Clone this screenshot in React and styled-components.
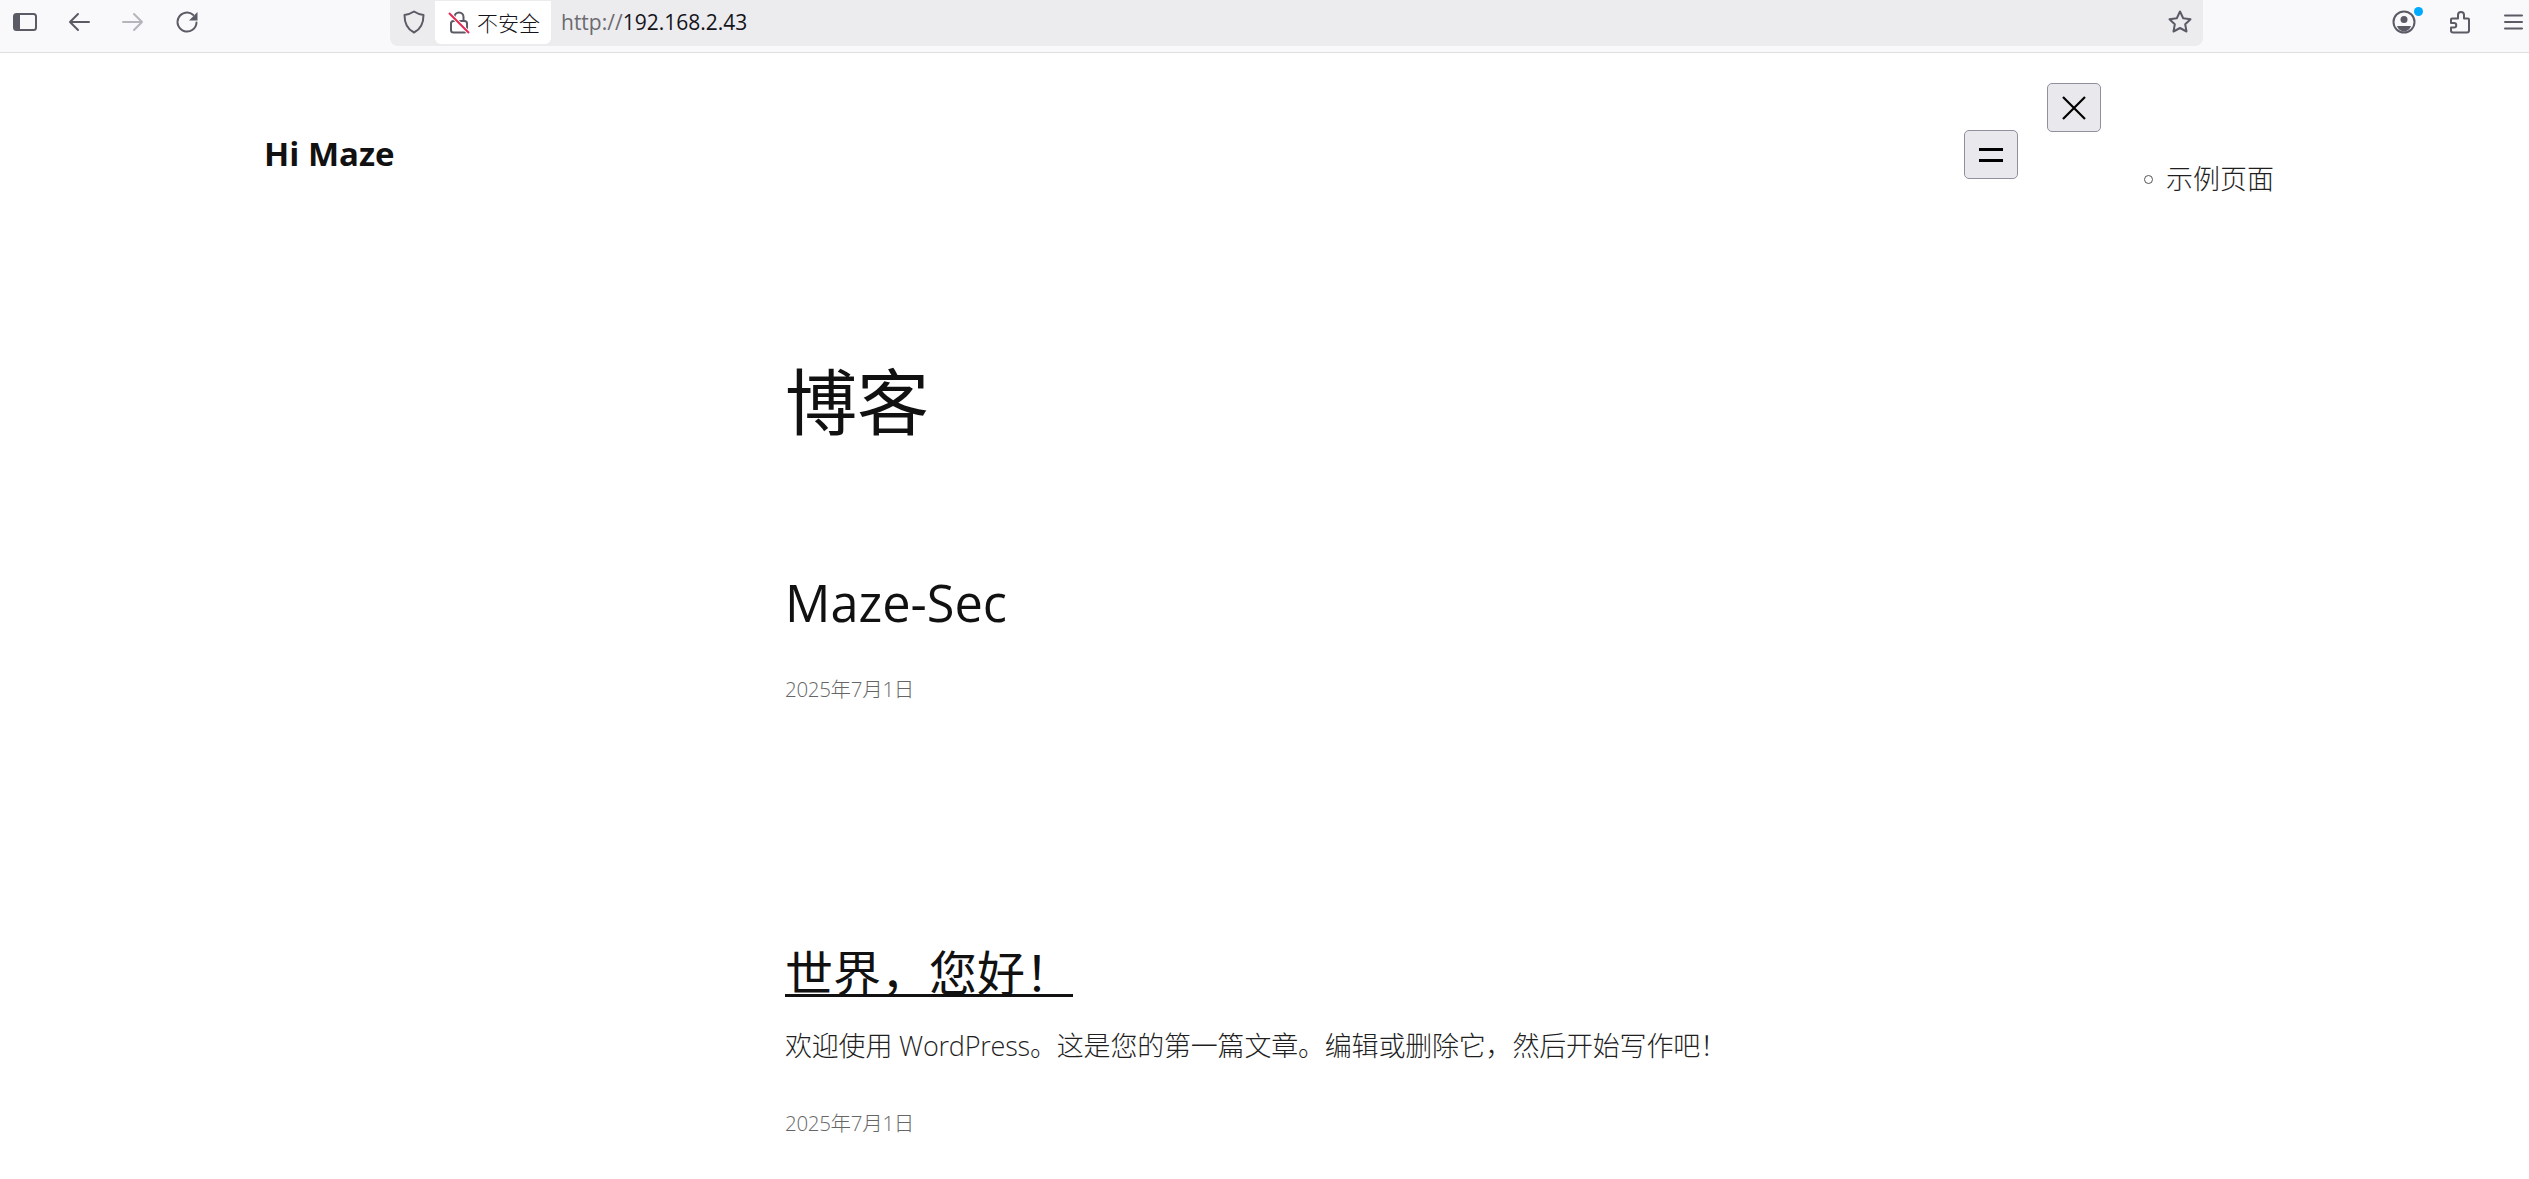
import styled, { createGlobalStyle } from 'styled-components';

const GlobalStyle = createGlobalStyle`
  html, body {
    margin: 0;
    padding: 0;
    background: #fff;
  }
  body {
    font-family: "Open Sans", "Noto Sans CJK SC", sans-serif;
    font-weight: 300;
    color: #111;
    overflow: hidden;
  }
`;

const Page = styled.div`
  width: 2529px;
  height: 1179px;
  overflow: hidden;
`;

/* browser chrome */
const Toolbar = styled.div`
  display: flex;
  align-items: flex-start;
  height: 52px;
  background: #f9f9fb;
  border-bottom: 1px solid #e0e0e2;
`;

const NavIcons = styled.div`
  display: flex;
  align-items: center;
  width: 390px;
  height: 44px;
  padding-left: 13px;
  gap: 30px;
  box-sizing: border-box;
`;

const UrlBar = styled.div`
  display: flex;
  align-items: center;
  width: 1813px;
  height: 46px;
  padding: 0 11px 2px 12px;
  box-sizing: border-box;
  background: #ececef;
  border-radius: 0 0 8px 8px;
`;

const NotSecure = styled.div`
  display: flex;
  align-items: center;
  gap: 7px;
  width: 116px;
  height: 43px;
  margin: -1px 0 -1px 9px;
  padding-left: 13px;
  box-sizing: border-box;
  background: #fff;
  border-radius: 0 0 6px 6px;
  font-family: "Noto Sans CJK SC", sans-serif;
  font-weight: 300;
  font-size: 21px;
  color: #15141a;
  white-space: nowrap;
`;

const Url = styled.div`
  flex: 1;
  margin-left: 10px;
  font-family: "Open Sans", sans-serif;
  font-weight: 400;
  font-size: 21px;
  color: #15141a;
  span {
    color: #6b6b70;
  }
`;

const RightIcons = styled.div`
  display: flex;
  align-items: center;
  width: 326px;
  height: 44px;
  padding-left: 189px;
  box-sizing: border-box;
`;

const ToolIcon = styled.div`
  position: relative;
  display: flex;
  margin-right: ${(p) => p.$after}px;
`;

const Dot = styled.span`
  position: absolute;
  top: -3px;
  right: -7px;
  width: 9px;
  height: 9px;
  border-radius: 50%;
  background: #0af;
`;

/* site header */
const Header = styled.header`
  display: flex;
  align-items: flex-start;
  padding: 30px 255px 0 264px;
`;

const SiteTitle = styled.div`
  flex: 1;
  margin-top: 49px;
  font-family: "Open Sans", sans-serif;
  font-weight: 700;
  font-size: 33px;
  line-height: 44px;
  color: #111;
`;

const SquareButton = styled.button`
  display: flex;
  align-items: center;
  justify-content: center;
  width: 54px;
  height: 49px;
  padding: 0;
  background: #e9e9ed;
  border: 1px solid #8f8f9d;
  border-radius: 5px;
`;

const OpenButton = styled(SquareButton)`
  margin-top: 47px;
`;

const Nav = styled.nav`
  margin-left: 29px;
`;

const MenuList = styled.ul`
  margin: 27px 0 0;
  padding: 0 0 0 97px;
  list-style: none;
  font-size: 27px;
  line-height: 40px;
  color: #1f1f1f;
`;

const MenuItem = styled.li`
  display: flex;
  align-items: center;
  gap: 13px;
  white-space: nowrap;
  &::before {
    content: '';
    width: 9px;
    height: 9px;
    box-sizing: border-box;
    border: 1px solid #555;
    border-radius: 50%;
  }
`;

/* posts */
const Main = styled.main`
  padding-left: 785px;
`;

const PageTitle = styled.h1`
  margin: 156px 0 0;
  font-weight: 400;
  font-size: 72px;
  line-height: 92px;
`;

const Post = styled.article`
  margin-top: ${(p) => p.$gap}px;
`;

const PostTitle = styled.h2`
  margin: 0;
  font-weight: 400;
  font-size: 50.5px;
  line-height: 70px;
`;

const PostLink = styled.a`
  color: #111;
  font-size: 48px;
  text-decoration: underline;
  text-decoration-thickness: 3px;
  text-underline-offset: 3px;
`;

const Excerpt = styled.p`
  margin: 18px 0 0;
  font-size: 27px;
  line-height: 40px;
  letter-spacing: -0.2px;
  color: #1f1f1f;
`;

const PostDate = styled.div`
  margin-top: ${(p) => p.$gap}px;
  font-size: 20.5px;
  line-height: 30px;
  letter-spacing: -0.3px;
  color: #666;
`;

const stroke = { fill: 'none', stroke: '#5b5b66', strokeWidth: 2, strokeLinecap: 'round', strokeLinejoin: 'round' };

const App = () => (
  <Page>
    <GlobalStyle />
    <Toolbar>
      <NavIcons>
        <svg width="24" height="24" viewBox="0 0 24 24">
          <rect x="1" y="4" width="22" height="16" rx="2.5" {...stroke} />
          <rect x="1" y="4" width="6" height="16" fill="#5b5b66" />
        </svg>
        <svg width="24" height="24" viewBox="0 0 24 24">
          <path d="M22 12H3M11 4l-8 8 8 8" {...stroke} />
        </svg>
        <svg width="24" height="24" viewBox="0 0 24 24">
          <path d="M2 12h19M13 4l8 8-8 8" {...stroke} stroke="#b5b5bb" />
        </svg>
        <svg width="24" height="24" viewBox="0 0 24 24">
          <path d="M21.5 12.5a9.5 9.5 0 1 1-3.2-7.6" {...stroke} />
          <path d="M22.5 2v8.5h-8.5z" fill="#5b5b66" />
        </svg>
      </NavIcons>
      <UrlBar>
        <svg width="24" height="24" viewBox="0 0 24 24">
          <path d="M12 1.5c3 2 6 3 9.5 3.5 0 8-2 14-9.5 17.5C4.5 19 2.5 13 2.5 5 6 4.500 9 3.500 12 1.500z" {...stroke} />
        </svg>
        <NotSecure>
          <svg width="22" height="24" viewBox="0 0 22 24">
            <path d="M6.5 11V7a4.5 4.5 0 0 1 9 0v4" {...stroke} />
            <rect x="3" y="11" width="16" height="11.5" rx="2.5" {...stroke} />
            <path d="M1 3l20 20" fill="none" stroke="#fff" strokeWidth="4" />
            <path d="M1 3l20 20" fill="none" stroke="#e22850" strokeWidth="2" />
          </svg>
          不安全
        </NotSecure>
        <Url>
          <span>http://</span>192.168.2.43
        </Url>
        <svg width="24" height="24" viewBox="0 0 24 24">
          <path d="M12 1.5l3.2 6.7 7.3 1-5.3 5.1 1.3 7.2-6.5-3.5-6.5 3.5 1.3-7.2-5.3-5.1 7.3-1z" {...stroke} />
        </svg>
      </UrlBar>
      <RightIcons>
        <ToolIcon $after={32}>
          <svg width="24" height="24" viewBox="0 0 24 24">
            <circle cx="12" cy="12" r="10.5" {...stroke} />
            <circle cx="12" cy="9.5" r="3.5" fill="#5b5b66" />
            <path d="M5 16h14c-1 3-4 5.5-7 5.5S6 19 5 16z" fill="#5b5b66" />
          </svg>
          <Dot />
        </ToolIcon>
        <ToolIcon $after={31}>
          <svg width="24" height="24" viewBox="0 0 24 24">
            <path d="M5 22.5h14a2 2 0 0 0 2-2V9.500a1 1 0 0 0-1-1h-4V5a3 3 0 0 0-6 0v3.500H4a1 1 0 0 0-1 1V13h3a2 2 0 0 1 0 4.500H3v3a2 2 0 0 0 2 2z" {...stroke} />
          </svg>
        </ToolIcon>
        <svg width="22" height="24" viewBox="0 0 22 24">
          <path d="M2 5.5h17M2 12h17M2 18.5h17" {...stroke} />
        </svg>
      </RightIcons>
    </Toolbar>

    <Header>
      <SiteTitle>Hi Maze</SiteTitle>
      <OpenButton aria-label="打开菜单">
        <svg width="24" height="14" viewBox="0 0 24 14">
          <path d="M0 1.5h24M0 12.5h24" stroke="#000" strokeWidth="3" fill="none" />
        </svg>
      </OpenButton>
      <Nav>
        <SquareButton aria-label="关闭菜单">
          <svg width="24" height="24" viewBox="0 0 24 24">
            <path d="M1 1l22 22M23 1L1 23" stroke="#000" strokeWidth="2.2" fill="none" />
          </svg>
        </SquareButton>
        <MenuList>
          <MenuItem>示例页面</MenuItem>
        </MenuList>
      </Nav>
    </Header>

    <Main>
      <PageTitle>博客</PageTitle>
      <Post $gap={121}>
        <PostTitle>Maze-Sec</PostTitle>
        <PostDate $gap={36}>2025年7月1日</PostDate>
      </Post>
      <Post $gap={233}>
        <PostTitle>
          <PostLink href="#">世界，您好！</PostLink>
        </PostTitle>
        <Excerpt>欢迎使用 WordPress。这是您的第一篇文章。编辑或删除它，然后开始写作吧！</Excerpt>
        <PostDate $gap={42}>2025年7月1日</PostDate>
      </Post>
    </Main>
  </Page>
);

export default App;
